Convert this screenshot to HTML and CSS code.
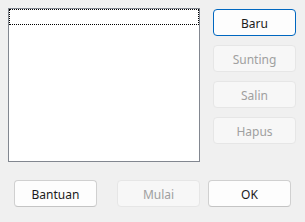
FILE: index.html
```html
<!DOCTYPE html>
<html>
<head>
<meta charset="utf-8">
<link rel="stylesheet" href="styles.css">
</head>
<body>
<div class="dialog">
  <div class="main">
    <div class="listbox">
      <div class="focus-item"></div>
    </div>
    <div class="side">
      <button class="btn default">Baru</button>
      <button class="btn disabled">Sunting</button>
      <button class="btn disabled">Salin</button>
      <button class="btn disabled">Hapus</button>
    </div>
  </div>
  <div class="bottom">
    <button class="btn">Bantuan</button>
    <button class="btn disabled mulai">Mulai</button>
    <button class="btn ok">OK</button>
  </div>
</div>
</body>
</html>
```

FILE: styles.css
```css
html, body {
  margin: 0;
  padding: 0;
  background: #f0f0f0;
  width: 305px;
  height: 222px;
  overflow: hidden;
  font-family: "Noto Sans", "Open Sans", sans-serif;
  font-size: 12px;
}
.dialog {
  padding: 8px 0 0 8px;
}
.main {
  display: flex;
  align-items: flex-start;
}
.listbox {
  box-sizing: border-box;
  width: 192px;
  height: 154px;
  background: #ffffff;
  border: 1px solid #828790;
}
.focus-item {
  box-sizing: border-box;
  height: 16px;
  border: 1px dotted #000000;
}
.side {
  display: flex;
  flex-direction: column;
  gap: 9px;
  margin-left: 13px;
  margin-top: 1px;
}
.btn {
  box-sizing: border-box;
  width: 83px;
  height: 27px;
  padding: 2px 0 0 0;
  margin: 0;
  background: #fdfdfd;
  border: 1px solid #d0d0d0;
  border-bottom-color: #c4c4c4;
  border-radius: 4px;
  font-family: "Noto Sans", "Open Sans", sans-serif;
  font-size: 12px;
  color: #1b1b1b;
}
.btn.default {
  border: 1px solid #0067c0;
}
.btn.disabled {
  background: #f7f7f7;
  border: 1px solid #e6e6e6;
  color: #a0a0a0;
}
.bottom {
  display: flex;
  margin-top: 18px;
  margin-left: 6px;
}
.mulai {
  margin-left: 20px;
}
.ok {
  margin-left: 8px;
}
```
